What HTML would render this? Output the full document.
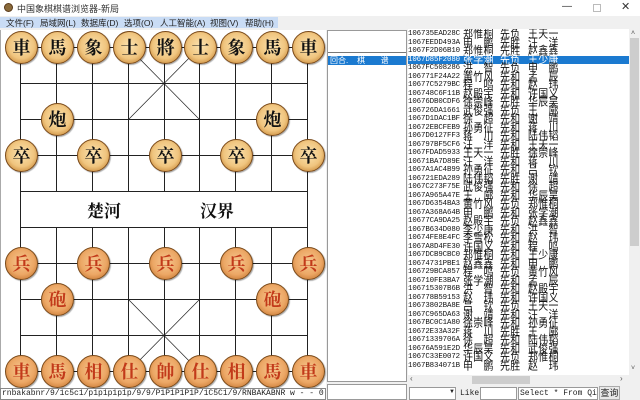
<!DOCTYPE html>
<html><head><meta charset="utf-8"><style>
*{margin:0;padding:0;box-sizing:border-box}
body{width:640px;height:400px;overflow:hidden;background:#f0f0f0;font-family:"Liberation Sans","Noto Sans CJK SC",sans-serif;position:relative}
.abs{position:absolute}
#title{left:0;top:0;width:640px;height:16px;background:#fff;font-size:9px;color:#333}
#menu{left:0;top:16px;width:640px;height:13px;background:#f0f0f0}
#menu .bar{position:absolute;left:0;top:1px;width:278px;height:11px;background:#c9dcf5}
#menu span{position:absolute;top:1px;font-size:8.5px;color:#222;white-space:nowrap}
#board{left:0;top:30px;width:326px;height:358px;background:#fff;border-left:1px solid #aaa}
.p{position:absolute;width:33px;height:33px;border-radius:50%;border:1px solid #7a4a1a;
background:radial-gradient(circle at 50% 45%,#fbe3b0 0%,#f0c57f 55%,#c98a3a 85%,#8f5a22 100%);
box-shadow:1px 1px 1px rgba(0,0,0,.35);font-family:"Noto Serif CJK SC","Noto Sans CJK SC",serif;font-weight:700;font-size:18px;line-height:31px;text-align:center;color:#111}
.r{background:radial-gradient(circle at 50% 45%,#f6c890 0%,#eca765 55%,#c97a35 85%,#8f4e1e 100%);color:#c23a1a}
#fen{left:0;top:388px;width:326px;height:12px;background:#fff;border:1px solid #888;font-family:"Liberation Mono",monospace;font-size:8px;line-height:10px;padding-left:1px;color:#222;white-space:nowrap;overflow:hidden}
#lpan{left:327px;top:30px;width:80px;height:352px;background:#fff;border:1px solid #999}
#list{left:408px;top:29px;width:221px;height:346px;background:#fff;overflow:hidden}
.row{position:absolute;left:0;width:221px;height:8.5px;font-size:8px;line-height:8.5px;white-space:nowrap;color:#111}
.row .h{position:absolute;left:0;font-family:"Liberation Mono",monospace;font-size:7.4px;letter-spacing:-.1px}
.row .n,.row .s,.row .o{position:absolute;font-family:"Liberation Sans","Noto Sans CJK SC",sans-serif;font-size:9px;line-height:8.5px;transform:scale(1.1,1.25);transform-origin:0 50%;letter-spacing:.3px}
.row .n{left:55px}.row .s{left:92px}.row .o{left:120px}
.sel{background:#1b7ad0;color:#fff}
.sel span{color:#fff}
</style></head><body>
<div id="title" class="abs">
<div class="abs" style="left:4px;top:3px;width:9px;height:9px;border-radius:50%;background:#8a6a3a;border:1px solid #5a3a1a"></div>
<div class="abs" style="left:17px;top:2px;font-family:'Liberation Sans','Noto Sans CJK SC',sans-serif">中国象棋棋谱浏览器-新局</div>
<div class="abs" style="left:562px;top:1px;font-size:10px;color:#333">—</div>
<div class="abs" style="left:593px;top:4px;width:8px;height:8px;border:1px solid #bbb"></div>
<div class="abs" style="left:621px;top:0px;font-size:11px;color:#333">✕</div>
</div>
<div id="menu" class="abs"><div class="bar"></div>
<span style="left:6px">文件(F)</span><span style="left:40px">局域网(L)</span><span style="left:81px">数据库(D)</span><span style="left:124px">选项(O)</span><span style="left:160px">人工智能(A)</span><span style="left:210px">视图(V)</span><span style="left:245px">帮助(H)</span></div>
<div id="board" class="abs">
<svg width="326" height="358" style="position:absolute;left:-1px;top:0" stroke="#222" stroke-width="1" fill="none">
<g transform="translate(0.5,-29.5)">
<line x1="20" y1="47" x2="307" y2="47"/><line x1="20" y1="83" x2="307" y2="83"/><line x1="20" y1="119" x2="307" y2="119"/><line x1="20" y1="155" x2="307" y2="155"/><line x1="20" y1="191" x2="307" y2="191"/>
<line x1="20" y1="227" x2="307" y2="227"/><line x1="20" y1="263" x2="307" y2="263"/><line x1="20" y1="299" x2="307" y2="299"/><line x1="20" y1="335" x2="307" y2="335"/><line x1="20" y1="371" x2="307" y2="371"/>
<line x1="20" y1="47" x2="20" y2="371"/><line x1="307" y1="47" x2="307" y2="371"/>
<line x1="56" y1="47" x2="56" y2="191"/><line x1="92" y1="47" x2="92" y2="191"/><line x1="128" y1="47" x2="128" y2="191"/><line x1="164" y1="47" x2="164" y2="191"/><line x1="199" y1="47" x2="199" y2="191"/><line x1="235" y1="47" x2="235" y2="191"/><line x1="271" y1="47" x2="271" y2="191"/>
<line x1="56" y1="227" x2="56" y2="371"/><line x1="92" y1="227" x2="92" y2="371"/><line x1="128" y1="227" x2="128" y2="371"/><line x1="164" y1="227" x2="164" y2="371"/><line x1="199" y1="227" x2="199" y2="371"/><line x1="235" y1="227" x2="235" y2="371"/><line x1="271" y1="227" x2="271" y2="371"/>
<line x1="128" y1="47" x2="199" y2="119" stroke-width=".7"/><line x1="199" y1="47" x2="128" y2="119" stroke-width=".7"/>
<line x1="128" y1="299" x2="199" y2="371" stroke-width=".7"/><line x1="199" y1="299" x2="128" y2="371" stroke-width=".7"/>
</g>
<text x="87" y="187" font-family="Noto Serif CJK SC,serif" font-size="17" font-weight="700" fill="#111" stroke="none">楚河</text>
<text x="200" y="187" font-family="Noto Serif CJK SC,serif" font-size="17" font-weight="700" fill="#111" stroke="none">汉界</text>
</svg>
<div class="p" style="left:4px;top:1px">車</div><div class="p" style="left:40px;top:1px">馬</div><div class="p" style="left:76px;top:1px">象</div><div class="p" style="left:112px;top:1px">士</div><div class="p" style="left:148px;top:1px">將</div><div class="p" style="left:183px;top:1px">士</div><div class="p" style="left:219px;top:1px">象</div><div class="p" style="left:255px;top:1px">馬</div><div class="p" style="left:291px;top:1px">車</div>
<div class="p" style="left:40px;top:73px">炮</div><div class="p" style="left:255px;top:73px">炮</div>
<div class="p" style="left:4px;top:109px">卒</div><div class="p" style="left:76px;top:109px">卒</div><div class="p" style="left:148px;top:109px">卒</div><div class="p" style="left:219px;top:109px">卒</div><div class="p" style="left:291px;top:109px">卒</div>
<div class="p r" style="left:4px;top:217px">兵</div><div class="p r" style="left:76px;top:217px">兵</div><div class="p r" style="left:148px;top:217px">兵</div><div class="p r" style="left:219px;top:217px">兵</div><div class="p r" style="left:291px;top:217px">兵</div>
<div class="p r" style="left:40px;top:253px">砲</div><div class="p r" style="left:255px;top:253px">砲</div>
<div class="p r" style="left:4px;top:325px">車</div><div class="p r" style="left:40px;top:325px">馬</div><div class="p r" style="left:76px;top:325px">相</div><div class="p r" style="left:112px;top:325px">仕</div><div class="p r" style="left:148px;top:325px">帥</div><div class="p r" style="left:183px;top:325px">仕</div><div class="p r" style="left:219px;top:325px">相</div><div class="p r" style="left:255px;top:325px">馬</div><div class="p r" style="left:291px;top:325px">車</div>
</div>
<div id="fen" class="abs">rnbakabnr/9/1c5c1/p1p1p1p1p/9/9/P1P1P1P1P/1C5C1/9/RNBAKABNR w - - 0 1</div>
<div id="lpan" class="abs">
<div class="abs" style="left:0;top:0;width:78px;height:22px;border-bottom:1px solid #777"></div>
<div class="abs sel" style="left:0;top:25px;width:78px;height:9px;font-size:8px;line-height:9px;white-space:nowrap;padding-left:2px">回合.&nbsp;&nbsp;&nbsp;&nbsp;棋&nbsp;&nbsp;&nbsp;&nbsp;&nbsp;&nbsp;&nbsp;谱</div>
</div>
<div class="abs" style="left:327px;top:384px;width:80px;height:16px;background:#fff;border:1px solid #999"></div>
<div id="list" class="abs">
<div class="row" style="top:1px"><span class="h">106735EAD28C</span><span class="n">郑惟桐</span><span class="s">先负</span><span class="o">王天一</span></div>
<div class="row" style="top:9.5px"><span class="h">1067EEDD493A</span><span class="n">申　鹏</span><span class="s">先胜</span><span class="o">汪　洋</span></div>
<div class="row" style="top:18px"><span class="h">1067F2D06B10</span><span class="n">郑惟桐</span><span class="s">先胜</span><span class="o">赵鑫鑫</span></div>
<div class="row sel" style="top:26.5px"><span class="h">1067D85F2080</span><span class="n">张学潮</span><span class="s">先负</span><span class="o">王少康</span></div>
<div class="row" style="top:35px"><span class="h">1067FC508286</span><span class="n">洪　智</span><span class="s">先负</span><span class="o">申　鹏</span></div>
<div class="row" style="top:43.5px"><span class="h">106771F24A22</span><span class="n">黄竹风</span><span class="s">先和</span><span class="o">孟　辰</span></div>
<div class="row" style="top:52px"><span class="h">10677C5279BC</span><span class="n">程　鸣</span><span class="s">先和</span><span class="o">赵　玮</span></div>
<div class="row" style="top:60.5px"><span class="h">106748C6F11B</span><span class="n">赵殿宇</span><span class="s">先和</span><span class="o">许国义</span></div>
<div class="row" style="top:69px"><span class="h">10676DB0CDF6</span><span class="n">徐崇峰</span><span class="s">先胜</span><span class="o">华辰昊</span></div>
<div class="row" style="top:77.5px"><span class="h">106726DA1661</span><span class="n">武俊强</span><span class="s">先负</span><span class="o">王　廓</span></div>
<div class="row" style="top:86px"><span class="h">1067D1DAC1BF</span><span class="n">徐　超</span><span class="s">先和</span><span class="o">谢　靖</span></div>
<div class="row" style="top:94.5px"><span class="h">10672EBCFEB9</span><span class="n">孙勇征</span><span class="s">先和</span><span class="o">蒋　川</span></div>
<div class="row" style="top:103px"><span class="h">1067D0127FF3</span><span class="n">蒋　川</span><span class="s">先和</span><span class="o">陆伟韬</span></div>
<div class="row" style="top:111.5px"><span class="h">106797BF5CF6</span><span class="n">汪　洋</span><span class="s">先和</span><span class="o">王天一</span></div>
<div class="row" style="top:120px"><span class="h">1067FDAD5933</span><span class="n">王天一</span><span class="s">先胜</span><span class="o">徐崇峰</span></div>
<div class="row" style="top:128.5px"><span class="h">10671BA7D89E</span><span class="n">汪　洋</span><span class="s">先和</span><span class="o">蒋　川</span></div>
<div class="row" style="top:137px"><span class="h">1067A1AC4B99</span><span class="n">孙勇征</span><span class="s">先和</span><span class="o">吕　钦</span></div>
<div class="row" style="top:145.5px"><span class="h">106721EDA289</span><span class="n">陆伟韬</span><span class="s">先胜</span><span class="o">谢　靖</span></div>
<div class="row" style="top:154px"><span class="h">1067C273F75E</span><span class="n">武俊强</span><span class="s">先和</span><span class="o">徐　超</span></div>
<div class="row" style="top:162.5px"><span class="h">1067A965A47E</span><span class="n">王　廓</span><span class="s">先和</span><span class="o">华辰昊</span></div>
<div class="row" style="top:171px"><span class="h">1067D6354BA3</span><span class="n">黄竹风</span><span class="s">先负</span><span class="o">郑惟桐</span></div>
<div class="row" style="top:179.5px"><span class="h">1067A368A64B</span><span class="n">申　鹏</span><span class="s">先和</span><span class="o">张学潮</span></div>
<div class="row" style="top:188px"><span class="h">10677CA9DA25</span><span class="n">赵殿宇</span><span class="s">先负</span><span class="o">赵鑫鑫</span></div>
<div class="row" style="top:196.5px"><span class="h">1067B634D080</span><span class="n">李少庚</span><span class="s">先和</span><span class="o">洪　智</span></div>
<div class="row" style="top:205px"><span class="h">10674FE8E4FC</span><span class="n">李雪松</span><span class="s">先和</span><span class="o">赵　玮</span></div>
<div class="row" style="top:213.5px"><span class="h">1067A8D4FE30</span><span class="n">许国义</span><span class="s">先和</span><span class="o">程　鸣</span></div>
<div class="row" style="top:222px"><span class="h">1067DCB9CBC0</span><span class="n">郑惟桐</span><span class="s">先和</span><span class="o">王少康</span></div>
<div class="row" style="top:230.5px"><span class="h">10674731PBE1</span><span class="n">赵鑫鑫</span><span class="s">先和</span><span class="o">申　鹏</span></div>
<div class="row" style="top:239px"><span class="h">106729BCA857</span><span class="n">程　鸣</span><span class="s">先负</span><span class="o">黄竹风</span></div>
<div class="row" style="top:247.5px"><span class="h">106710FE3BA7</span><span class="n">张学潮</span><span class="s">先和</span><span class="o">孟　辰</span></div>
<div class="row" style="top:256px"><span class="h">106715307B6B</span><span class="n">洪　智</span><span class="s">先和</span><span class="o">赵殿宇</span></div>
<div class="row" style="top:264.5px"><span class="h">106778B59153</span><span class="n">赵　玮</span><span class="s">先和</span><span class="o">许国义</span></div>
<div class="row" style="top:273px"><span class="h">10673802BA8E</span><span class="n">吕　钦</span><span class="s">先负</span><span class="o">王天一</span></div>
<div class="row" style="top:281.5px"><span class="h">1067C965DA63</span><span class="n">谢　靖</span><span class="s">先和</span><span class="o">汪　洋</span></div>
<div class="row" style="top:290px"><span class="h">1067BC0C1A80</span><span class="n">徐崇峰</span><span class="s">先和</span><span class="o">孙勇征</span></div>
<div class="row" style="top:298.5px"><span class="h">10672E33A32F</span><span class="n">蒋　川</span><span class="s">先胜</span><span class="o">王　廓</span></div>
<div class="row" style="top:307px"><span class="h">10671339706A</span><span class="n">徐　超</span><span class="s">先和</span><span class="o">陆伟韬</span></div>
<div class="row" style="top:315.5px"><span class="h">10676A591E2D</span><span class="n">华辰昊</span><span class="s">先和</span><span class="o">武俊强</span></div>
<div class="row" style="top:324px"><span class="h">1067C33E0072</span><span class="n">许国义</span><span class="s">先负</span><span class="o">郑惟桐</span></div>
<div class="row" style="top:332.5px"><span class="h">1067B834071B</span><span class="n">申　鹏</span><span class="s">先胜</span><span class="o">赵　玮</span></div>
</div>
<div class="abs" style="left:629px;top:29px;width:11px;height:346px;background:#f0f0f0"></div>
<div class="abs" style="left:631px;top:30px;font-size:7px;color:#555">˄</div>
<div class="abs" style="left:630px;top:38px;width:9px;height:208px;background:#cdcdcd"></div>
<div class="abs" style="left:631px;top:365px;font-size:7px;color:#555">˅</div>
<div class="abs" style="left:408px;top:375px;width:221px;height:10px;background:#f0f0f0"></div>
<div class="abs" style="left:472px;top:376px;width:58px;height:8px;background:#cdcdcd"></div>
<div class="abs" style="left:410px;top:374px;font-size:8px;color:#555">‹</div>
<div class="abs" style="left:620px;top:374px;font-size:8px;color:#555">›</div>
<div class="abs" style="left:409px;top:387px;width:47px;height:13px;background:#fff;border:1px solid #999"></div>
<div class="abs" style="left:449px;top:389px;font-size:6px;color:#222">▼</div>
<div class="abs" style="left:460px;top:389px;font-family:'Liberation Mono',monospace;font-size:8px;color:#222">Like</div>
<div class="abs" style="left:480px;top:387px;width:37px;height:13px;background:#fff;border:1px solid #999"></div>
<div class="abs" style="left:518px;top:387px;width:80px;height:13px;background:#fff;border:1px solid #999;font-family:'Liberation Mono',monospace;font-size:8px;line-height:12px;padding-left:1px;white-space:nowrap;overflow:hidden;color:#222">Select * From Qip</div>
<div class="abs" style="left:599px;top:386px;width:21px;height:14px;background:#e8e8e8;border:1px solid #aaa;font-size:9px;line-height:12px;text-align:center;color:#222">查询</div>
</body></html>
